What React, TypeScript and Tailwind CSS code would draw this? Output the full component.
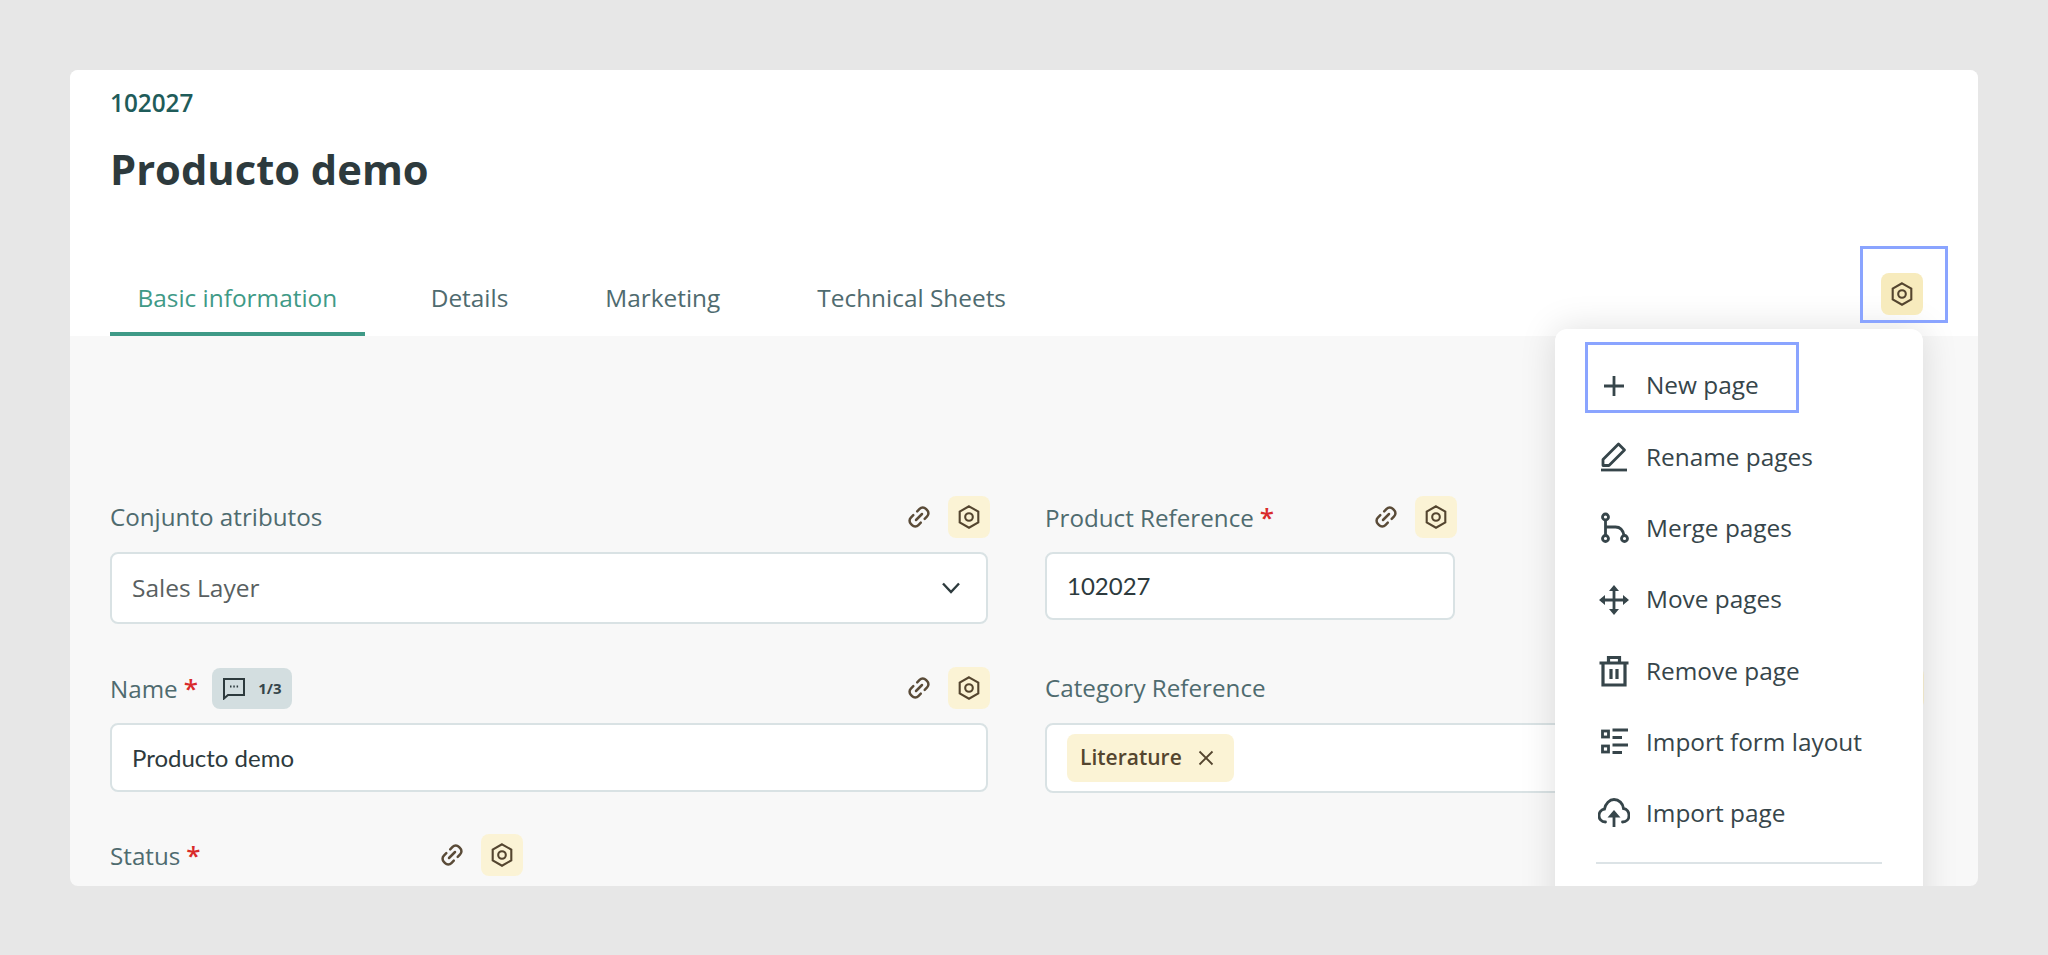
import React from "react";

const Hex = ({ className = "" }: { className?: string }) => (
  <svg viewBox="0 0 24 24" width="24" height="24" fill="none" stroke="#54452f" strokeWidth="2.100" className={className}>
    <path d="M12 1.300 21.300 6.600V17.400L12 22.700 2.700 17.400V6.600Z" strokeLinejoin="miter" />
    <circle cx="12" cy="12" r="3.800" />
  </svg>
);

const LinkIcon = () => (
  <svg viewBox="0 0 24 24" width="24" height="24" fill="none" stroke="#5a4b38" strokeWidth="2.500" strokeLinecap="round">
    <path d="M10.200 6.300 12.600 3.900a4.400 4.400 0 0 1 6.300 0l1.200 1.200a4.400 4.400 0 0 1 0 6.300l-2.400 2.400" />
    <path d="M13.800 17.700 11.400 20.100a4.400 4.400 0 0 1-6.300 0l-1.200-1.200a4.400 4.400 0 0 1 0-6.300l2.400-2.400" />
    <path d="M9 15 15 9" />
  </svg>
);

const HexBadge = ({ strong = false }: { strong?: boolean }) => (
  <div className={`w-[42px] h-[42px] rounded-lg flex items-center justify-center shrink-0 ${strong ? "bg-[#f7ebbd]" : "bg-[#fbf3d5]"}`}>
    <Hex />
  </div>
);

const Actions = () => (
  <div className="flex items-center gap-[17px]">
    <LinkIcon />
    <HexBadge />
  </div>
);

const Label = ({ text, required = false }: { text: string; required?: boolean }) => (
  <span className="text-[24.200px] leading-[30px] text-[#4f6b6f]">
    {text}
    {required && <span className="text-[#d92b2b] ml-[6px] font-semibold text-[26px]">*</span>}
  </span>
);

const iconProps = {
  viewBox: "0 0 32 32",
  width: 32,
  height: 32,
  fill: "none",
  stroke: "#36454a",
  strokeWidth: 2.800,
};

const menuItems: { label: string; icon: React.ReactNode }[] = [
  {
    label: "New page",
    icon: (
      <svg {...iconProps}>
        <path d="M16 6V26M6 16H26" />
      </svg>
    ),
  },
  {
    label: "Rename pages",
    icon: (
      <svg {...iconProps}>
        <path d="M3 29H29" />
        <path d="M5 24V18.500L20.500 3 26.500 9 11 24.500H5Z" strokeLinejoin="round" />
      </svg>
    ),
  },
  {
    label: "Merge pages",
    icon: (
      <svg {...iconProps}>
        <circle cx="7.500" cy="5" r="3" />
        <circle cx="7.500" cy="26.500" r="3" />
        <circle cx="26.500" cy="26.500" r="3" />
        <path d="M7.500 8V23.500M7.500 15H17.500C21.500 15 25 18 26 23.500" />
      </svg>
    ),
  },
  {
    label: "Move pages",
    icon: (
      <svg {...iconProps}>
        <path d="M16 4V28M3 16H29" />
        <path d="M16 1 21 7H11ZM16 31 11 25H21ZM1 16 7 11V21ZM31 16 25 21V11Z" fill="#36454a" stroke="none" />
      </svg>
    ),
  },
  {
    label: "Remove page",
    icon: (
      <svg {...iconProps} strokeWidth={3.200}>
        <path d="M1.500 8H30.500M5 8V30H27V8M10.500 8V2.500H21.500V8" />
        <path d="M13 14V24M19 14V24" />
      </svg>
    ),
  },
  {
    label: "Import form layout",
    icon: (
      <svg {...iconProps}>
        <rect x="4.500" y="5" width="6" height="6" />
        <rect x="4.500" y="20" width="6" height="6" />
        <path d="M14.500 4H30M14.500 11.500H24M14.500 19H30M14.500 26.500H24" />
      </svg>
    ),
  },
  {
    label: "Import page",
    icon: (
      <svg {...iconProps}>
        <path d="M7.500 25C3 25 1 21.500 1 18.500 1 15 3.500 12.500 6.500 12 7.500 6.500 11.500 2.500 16 2.500 21 2.500 25 6.500 25.500 11.500 29 12 31 15 31 18.500 31 22 28.500 25 24.500 25" strokeLinecap="round" />
        <path d="M16 30V17" />
        <path d="M16 13 22.500 20.500H9.500Z" fill="#36454a" stroke="none" />
      </svg>
    ),
  },
];

const tabs = ["Basic information", "Details", "Marketing", "Technical Sheets"];

export default function App() {
  return (
    <div className="h-[955px] bg-[#e7e7e7] pt-[70px] px-[70px] font-['Open_Sans',sans-serif] overflow-hidden">
      <div className="relative h-[816px] rounded-lg overflow-hidden bg-[#f8f8f8]">
        {/* Header */}
        <header className="h-[266px] bg-white px-[40px] pt-[18px] flex flex-col">
          <div className="text-[24.300px] leading-[30px] font-semibold text-[#1f5c5a]">102027</div>
          <h1 className="mt-[23px] text-[41.700px] leading-[56px] font-bold text-[#2d3a3d]">Producto demo</h1>
          <nav className="mt-auto flex gap-[41px] h-[68px]">
            {tabs.map((t, i) => (
              <div
                key={t}
                className={`pt-[14px] text-[24.400px] leading-[32px] whitespace-nowrap border-b-4 ${
                  i === 0
                    ? "pl-[27.500px] pr-[27.500px] -mr-[3px] border-[#3f9a87] text-[#3f9a87]"
                    : "px-[28px] border-transparent text-[#4f6b6f]"
                }`}
              >
                {t}
              </div>
            ))}
          </nav>
        </header>

        {/* Form */}
        <main className="px-[40px] pt-[160px]">
          <div className="flex gap-[57px]">
            <div className="w-[878px]">
              <div className="flex items-center justify-between h-[42px] -mr-[2px]">
                <Label text="Conjunto atributos" />
                <Actions />
              </div>
              <div className="mt-[14px] h-[72px] rounded-lg border-2 border-[#d9e2e4] bg-white pl-[20px] pr-[26px] flex items-center justify-between">
                <span className="text-[24.500px] text-[#595f61]">Sales Layer</span>
                <svg viewBox="0 0 18 12" width="18" height="12" fill="none" stroke="#2d3a3d" strokeWidth="2.400">
                  <path d="M1 1.500 9 10 17 1.500" />
                </svg>
              </div>
            </div>
            <div className="w-[410px]">
              <div className="flex items-center justify-between h-[42px] -mr-[2px]">
                <Label text="Product Reference" required />
                <Actions />
              </div>
              <div className="mt-[14px] h-[68px] rounded-lg border-2 border-[#d9e2e4] bg-white px-[20px] flex items-center">
                <span className="text-[24px] font-['Lato',sans-serif] text-[#2d3a3d]">102027</span>
              </div>
            </div>
          </div>

          <div className="mt-[43px] flex gap-[57px]">
            <div className="w-[878px]">
              <div className="flex items-center justify-between h-[42px] -mr-[2px]">
                <div className="flex items-center gap-[14px]">
                  <Label text="Name" required />
                  <div className="h-[41px] w-[80px] rounded-lg bg-[#d3dee0] flex items-center justify-center gap-[12px]">
                    <svg viewBox="0 0 24 24" width="24" height="24" fill="none" stroke="#2d3a3d" strokeWidth="2">
                      <path d="M2 3H22V19H6L2 22.500Z" strokeLinejoin="miter" />
                      <path d="M8 10.500H9.500M11.300 10.500H12.800M14.600 10.500H16.100" />
                    </svg>
                    <span className="text-[15px] font-bold text-[#36454a]">1/3</span>
                  </div>
                </div>
                <Actions />
              </div>
              <div className="mt-[14px] h-[69px] rounded-lg border-2 border-[#d9e2e4] bg-white px-[20px] flex items-center">
                <span className="text-[24px] font-['Lato',sans-serif] text-[#2d3a3d]">Producto demo</span>
              </div>
            </div>
            <div className="w-[877px]">
              <div className="flex items-center justify-between h-[42px] -mr-[2px]">
                <Label text="Category Reference" />
                <Actions />
              </div>
              <div className="mt-[14px] h-[70px] rounded-lg border-2 border-[#d9e2e4] bg-white px-[20px] flex items-center">
                <div className="h-[48px] w-[167px] rounded-lg bg-[#fbf3d5] flex items-center pl-[13px] gap-[16px]">
                  <span className="text-[21px] font-semibold text-[#54452f]">Literature</span>
                  <svg viewBox="0 0 16 16" width="16" height="16" fill="none" stroke="#54452f" strokeWidth="1.800">
                    <path d="M1.500 1.500 14.500 14.500M14.500 1.500 1.500 14.500" />
                  </svg>
                </div>
              </div>
            </div>
          </div>

          <div className="mt-[41px] w-[413px] flex items-center justify-between h-[42px]">
            <Label text="Status" required />
            <Actions />
          </div>
        </main>

        {/* Dropdown menu */}
        <div className="absolute left-[1485px] top-[259px] w-[368px] h-[600px] rounded-t-xl bg-white shadow-[0_0_36px_rgba(0,0,0,0.13)] pt-[21px]">
          {menuItems.map((m) => (
            <div key={m.label} className="h-[71.300px] flex items-center">
              <div className="w-[91px] pl-[43px] flex items-center shrink-0">{m.icon}</div>
              <span className="text-[24.400px] text-[#36454a] whitespace-nowrap">{m.label}</span>
            </div>
          ))}
          <div className="mt-[13px] mx-[41px] h-[2px] bg-[#dce3e6]" />
        </div>

        {/* Annotation boxes */}
        <div className="absolute left-[1790px] top-[176px] w-[88px] h-[77px] border-[3px] border-[#8aa4ff]">
          <div className="absolute left-[18px] top-[24px]">
            <HexBadge strong />
          </div>
        </div>
        <div className="absolute left-[1515px] top-[272px] w-[214px] h-[71px] border-[3px] border-[#8aa4ff]" />
      </div>
    </div>
  );
}
